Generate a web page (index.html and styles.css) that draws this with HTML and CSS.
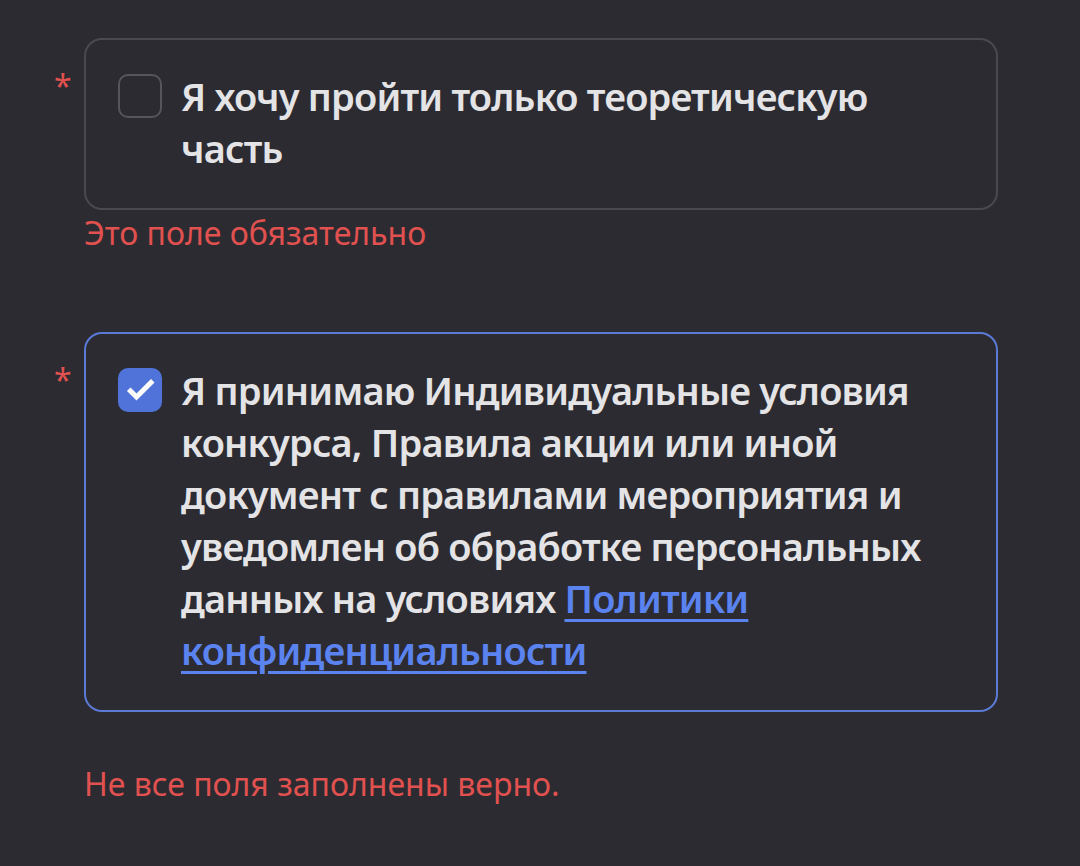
FILE: index.html
```html
<!DOCTYPE html>
<html lang="ru">
<head>
<meta charset="utf-8">
<link rel="stylesheet" href="styles.css">
</head>
<body>
<div class="form">
  <div class="field">
    <div class="row">
      <span class="req">*</span>
      <label class="box">
        <span class="check"></span>
        <span class="text">Я хочу пройти только теоретическую часть</span>
      </label>
    </div>
    <div class="error">Это поле обязательно</div>
  </div>
  <div class="field second">
    <div class="row">
      <span class="req">*</span>
      <label class="box active">
        <span class="check checked">
          <svg viewBox="0 0 44 44" width="44" height="44"><path d="M12.5 23 L18.5 29 L33 14.5" fill="none" stroke="#fff" stroke-width="5" stroke-linecap="square" stroke-linejoin="miter"/></svg>
        </span>
        <span class="text">Я принимаю Индивидуальные условия конкурса, Правила акции или иной документ с правилами мероприятия и уведомлен об обработке персональных данных на условиях <a href="#">Политики конфиденциальности</a></span>
      </label>
    </div>
  </div>
  <div class="error final">Не все поля заполнены верно.</div>
</div>
</body>
</html>
```
FILE: styles.css
```css
html, body {
  margin: 0;
  padding: 0;
  background: #2c2b31;
  height: 100%;
}
body {
  font-family: "Noto Sans", "Open Sans", sans-serif;
  color: #e4e4e6;
}
.form {
  padding: 38px 82px 0 54px;
}
.row {
  display: flex;
  align-items: flex-start;
}
.req {
  width: 30px;
  flex: none;
  color: #e0514f;
  font-size: 32px;
  line-height: 1;
  margin-top: 32px;
}
.box {
  flex: 1;
  display: flex;
  align-items: flex-start;
  gap: 19px;
  border: 2px solid #4a494f;
  border-radius: 18px;
  padding: 30px 32px 34px 32px;
}
.box.active {
  border-color: #5a7ad6;
}
.check {
  flex: none;
  width: 44px;
  height: 44px;
  box-sizing: border-box;
  border: 2px solid #56555b;
  border-radius: 10px;
  margin-top: 4px;
}
.check.checked {
  border: none;
  background: #4f73d8;
}
.check svg { display: block; }
.text {
  font-size: 38px;
  font-weight: 600;
  line-height: 52px;
  letter-spacing: -0.8px;
}
.text a {
  color: #5b83ef;
  text-decoration: underline;
  text-decoration-thickness: 3px;
  text-underline-offset: 6px;
}
.error {
  margin-left: 30px;
  color: #e0514f;
  font-size: 32px;
  line-height: 46px;
}
.second {
  margin-top: 76px;
}
.final {
  margin-top: 49px;
}
```
